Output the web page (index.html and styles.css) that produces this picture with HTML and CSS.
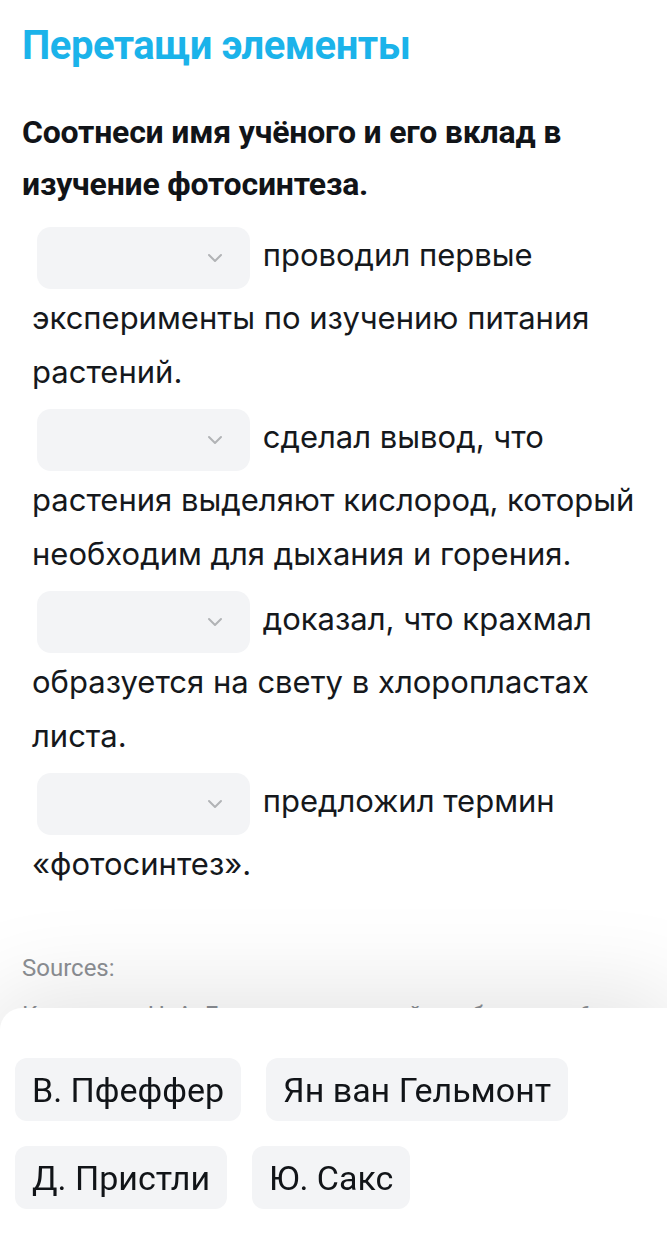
FILE: index.html
```html
<!DOCTYPE html>
<html lang="ru">
<head>
<meta charset="utf-8">
<link rel="stylesheet" href="styles.css">
</head>
<body>
<main class="page">
  <h1 class="title">Перетащи элементы</h1>
  <p class="question">Соотнеси имя учёного и его вклад в изучение фотосинтеза.</p>
  <div class="items">
    <p class="item"><span class="drop"><svg class="chev" viewBox="0 0 16 10" width="16" height="10"><path d="M2 2 L8 8 L14 2" fill="none" stroke="#b1b3b6" stroke-width="2" stroke-linecap="round" stroke-linejoin="round"/></svg></span> проводил первые эксперименты по изучению питания растений.</p>
    <p class="item"><span class="drop"><svg class="chev" viewBox="0 0 16 10" width="16" height="10"><path d="M2 2 L8 8 L14 2" fill="none" stroke="#b1b3b6" stroke-width="2" stroke-linecap="round" stroke-linejoin="round"/></svg></span> сделал вывод, что растения выделяют кислород, который необходим для дыхания и горения.</p>
    <p class="item"><span class="drop"><svg class="chev" viewBox="0 0 16 10" width="16" height="10"><path d="M2 2 L8 8 L14 2" fill="none" stroke="#b1b3b6" stroke-width="2" stroke-linecap="round" stroke-linejoin="round"/></svg></span> доказал, что крахмал образуется на свету в хлоропластах листа.</p>
    <p class="item"><span class="drop"><svg class="chev" viewBox="0 0 16 10" width="16" height="10"><path d="M2 2 L8 8 L14 2" fill="none" stroke="#b1b3b6" stroke-width="2" stroke-linecap="round" stroke-linejoin="round"/></svg></span> предложил термин «фотосинтез».</p>
  </div>
  <div class="sources">
    <p class="sources-title">Sources:</p>
    <p class="sources-text">Кузнецова Н. А. Биология растений: учебник для 6 класса</p>
  </div>
</main>
<section class="sheet">
  <div class="chips">
    <span class="chip">В. Пфеффер</span>
    <span class="chip">Ян ван Гельмонт</span>
    <span class="chip">Д. Пристли</span>
    <span class="chip">Ю. Сакс</span>
  </div>
</section>
</body>
</html>
```

FILE: styles.css
```css
html, body {
  margin: 0;
  padding: 0;
  height: 100%;
  overflow: hidden;
  background: #ffffff;
}
body {
  font-family: Roboto, "Noto Sans", sans-serif;
  color: #111418;
}
.page {
  padding: 18px 22px 0 22px;
}
.title {
  margin: 0;
  font-size: 40px;
  line-height: 56px;
  font-weight: 700;
  color: #1bb3ea;
  letter-spacing: -0.5px;
}
.question {
  margin: 32px 0 0 0;
  font-size: 32px;
  line-height: 52px;
  font-weight: 700;
  color: #111418;
  letter-spacing: -0.2px;
}
.items {
  margin-top: 15px;
  padding-left: 10px;
}
.item {
  margin: 0 0 8px 0;
  font-family: Inter, Roboto, sans-serif;
  font-size: 31px;
  line-height: 54px;
  font-weight: 400;
  color: #15181c;
}
.drop {
  display: inline-flex;
  align-items: center;
  justify-content: flex-end;
  box-sizing: border-box;
  width: 213px;
  height: 62px;
  margin: 2px 4px 2px 5px;
  padding-right: 27px;
  vertical-align: middle;
  background: #f3f4f6;
  border-radius: 14px;
}
.chev {
  display: block;
}
.sources {
  margin-top: 62px;
}
.sources-title {
  margin: 0;
  font-size: 24px;
  line-height: 30px;
  color: #8c8f94;
}
.sources-text {
  margin: 17px 0 0 0;
  font-size: 24px;
  line-height: 30px;
  color: #8c8f94;
}
.sheet {
  position: fixed;
  left: 0;
  right: 0;
  bottom: 0;
  height: 235px;
  background: #ffffff;
  border-radius: 22px 0 0 0;
  box-shadow: 0 0 100px 10px rgba(0, 0, 0, 0.12);
  box-sizing: border-box;
  padding: 50px 15px 0 15px;
}
.chips {
  display: flex;
  flex-wrap: wrap;
  gap: 25px 25px;
}
.chip {
  display: inline-flex;
  align-items: center;
  height: 63px;
  padding: 0 17px;
  background: #f3f4f6;
  border-radius: 12px;
  font-size: 34px;
  color: #111418;
}
```
